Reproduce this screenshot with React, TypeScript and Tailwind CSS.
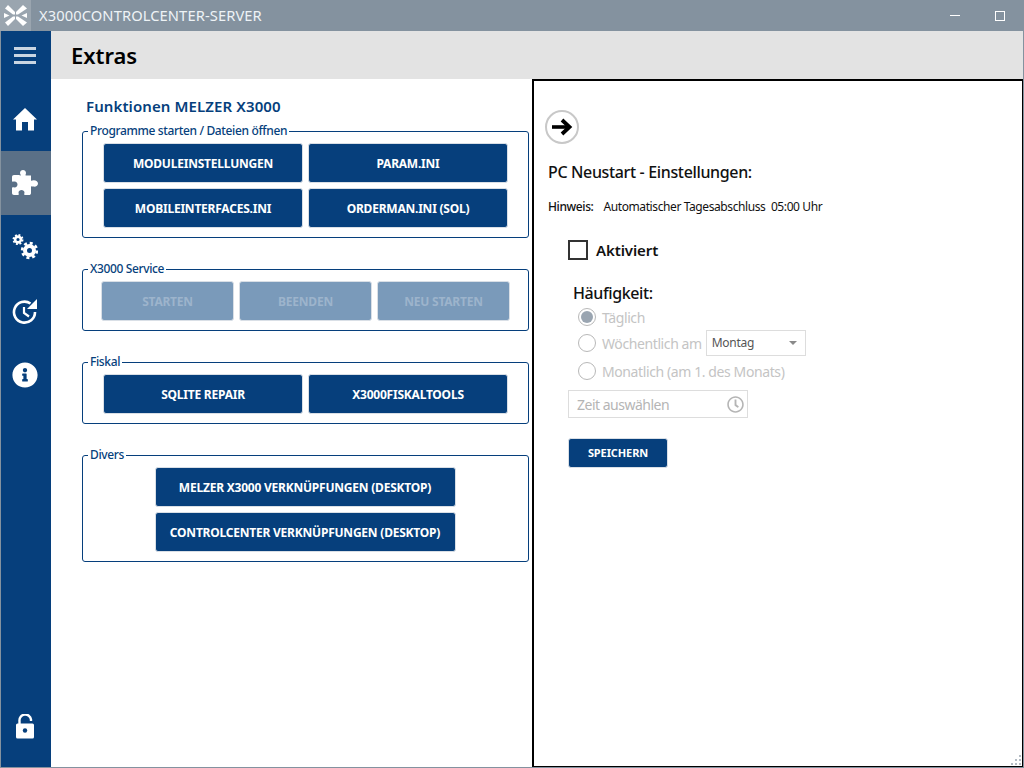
import React from 'react';
import { FaInfoCircle, FaRegClock } from 'react-icons/fa';

function Logo() {
  return (
    <svg width="31" height="31" viewBox="0 0 31 31" className="bg-[#9aa5af] shrink-0">
      <g fill="#ffffff">
        <path d="M8 5 L11 8 L15 12 L15 14.5 L13 14.5 L5 8.5 Z" />
        <path d="M23 5 L27 8.5 L18 14.5 L16 14.5 L16 12 Z" />
        <path d="M5 22.5 L13 16.5 L15 16.5 L15 19 L8 26 Z" />
        <path d="M27 22.5 L23 26 L16 19 L16 16.5 L18 16.5 Z" />
        <path d="M4 13 L9.5 15.5 L4 18 Z" />
        <path d="M27 13 L21.5 15.5 L27 18 Z" />
      </g>
    </svg>
  );
}

function HomeIcon() {
  return (
    <svg width="24" height="23" viewBox="0 0 24 23" fill="#ffffff">
      <path d="M12 0 L24 11.5 L21 11.5 L21 22.5 L15 22.5 L15 14 L9 14 L9 22.5 L3 22.5 L3 11.5 L0 11.5 Z" />
    </svg>
  );
}

function PuzzleIcon() {
  return (
    <svg width="26" height="26" viewBox="0 0 26 26" fill="#ffffff">
      <path d="M7 5 C7 5 8 5.5 8.5 5.5 C9.5 5.5 8 4.5 8 3 C8 1 9.5 0 11 0 C12.5 0 14 1 14 3 C14 4.5 12.8 5.5 14 5.5 L19 5.5 L19 10 C19 11.5 20 10.5 21.5 10.2 C24 10 26 11.5 26 13.5 C26 15.5 24 17 21.5 16.6 C20 16.4 19 15.5 19 17 L19 23 C19 24.5 18 25 17 25 L13 25 C11.5 25 12.5 23.5 12.5 22.5 C12.5 21 11 20 9.5 20 C8 20 6.5 21 6.5 22.5 C6.5 23.5 7.5 25 6 25 L2 25 C0.8 25 0 24.2 0 23 L0 18 C0 16.8 1.5 17.5 2.5 17.5 C4.5 17.5 5.5 16 5.5 14.5 C5.5 13 4.5 11.5 2.5 11.5 C1.5 11.5 0 12.2 0 11 L0 7 C0 5.8 0.8 5 2 5 Z" />
    </svg>
  );
}

function GearsIcon() {
  return (
    <svg width="26" height="26" viewBox="0 0 26 26" fill="none" stroke="#ffffff">
      <circle cx="6" cy="5.5" r="2.9" strokeWidth="2.6" />
      <circle cx="6" cy="5.5" r="4.6" strokeWidth="1.8" strokeDasharray="1.9 1.71" />
      <circle cx="17.5" cy="16.5" r="4.5" strokeWidth="4" />
      <circle cx="17.5" cy="16.5" r="7.4" strokeWidth="2.6" strokeDasharray="3 2.81" />
    </svg>
  );
}

function HistoryIcon() {
  return (
    <svg width="26" height="26" viewBox="0 0 26 26" fill="none" stroke="#ffffff">
      <path d="M23 14 A10.5 10.5 0 1 1 18.5 5.5" strokeWidth="2.6" />
      <path d="M25 1 L25 11 L15 11 Z" fill="#ffffff" stroke="none" />
      <path d="M12 9 L12 15 L17 18.5" strokeWidth="2.2" />
    </svg>
  );
}

function LockIcon() {
  return (
    <svg width="20" height="25" viewBox="0 0 20 25" fill="none">
      <path d="M4.5 10 L4.5 7 A5.8 5.8 0 0 1 16 5.5 L16 7" stroke="#ffffff" strokeWidth="2.4" />
      <rect x="1" y="9.5" width="18" height="15" rx="1.5" fill="#ffffff" />
      <circle cx="10" cy="16.5" r="2.2" fill="#063f7c" />
    </svg>
  );
}

function ArrowIcon() {
  return (
    <svg width="22" height="18" viewBox="0 0 22 18" fill="none" stroke="#000000">
      <path d="M1 9 L18 9" strokeWidth="3.6" />
      <path d="M11 2 L18.5 9 L11 16" strokeWidth="3.8" />
    </svg>
  );
}

function SideItem({ children, active }: { children: React.ReactNode; active?: boolean }) {
  return (
    <div className={`h-16 flex items-center justify-center pr-[2px] text-white ${active ? 'bg-[#5a7087]' : ''}`}>
      {children}
    </div>
  );
}

function Sidebar() {
  return (
    <div className="w-[50px] shrink-0 bg-[#063f7c] flex flex-col">
      <div className="h-[56px] flex flex-col items-center justify-center gap-[4px] pb-[8px] pr-[2px]">
        <div className="w-[22px] h-[3px] bg-[#c9d5e2]" />
        <div className="w-[22px] h-[3px] bg-[#c9d5e2]" />
        <div className="w-[22px] h-[3px] bg-[#c9d5e2]" />
      </div>
      <SideItem><HomeIcon /></SideItem>
      <SideItem active><PuzzleIcon /></SideItem>
      <SideItem><GearsIcon /></SideItem>
      <SideItem><HistoryIcon /></SideItem>
      <SideItem><FaInfoCircle size={26} /></SideItem>
      <div className="mt-auto h-[78px] flex items-center justify-center pr-[2px] pb-[3px]">
        <LockIcon />
      </div>
    </div>
  );
}

function Btn({ label, w, disabled }: { label: string; w: string; disabled?: boolean }) {
  return (
    <button
      className={`${w} h-10 shrink-0 rounded-[3px] border border-[#d9dfe6] pt-[1px] text-[12px] font-bold tracking-[-0.22px] flex items-center justify-center ${
        disabled ? 'bg-[#7a9aba] text-[#9db4cc]' : 'bg-[#063f7c] text-white'
      }`}
    >
      {label}
    </button>
  );
}

function Group({ title, height, children }: { title: string; height: string; children: React.ReactNode }) {
  return (
    <fieldset className={`${height} border border-[#063f7c] rounded-[3px]`}>
      <legend className="ml-[5px] px-[2px] text-[12px] leading-[18px] tracking-[-0.36px] text-[#063f7c] font-medium">{title}</legend>
      {children}
    </fieldset>
  );
}

function LeftPanel() {
  return (
    <div className="w-[481px] shrink-0 pl-[31px] pr-[3px] pt-[16px]">
      <div className="pl-[4px] h-[22px] text-[15px] leading-[22px] font-semibold tracking-[0.1px] text-[#063f7c]">Funktionen MELZER X3000</div>
      <div className="mt-[5px] flex flex-col">
        <Group title="Programme starten / Dateien öffnen" height="h-[116px]">
          <div className="pt-[3px] pl-[20px] flex flex-col gap-[5px]">
            <div className="flex gap-[5px]">
              <Btn label="MODULEINSTELLUNGEN" w="w-[200px]" />
              <Btn label="PARAM.INI" w="w-[200px]" />
            </div>
            <div className="flex gap-[5px]">
              <Btn label="MOBILEINTERFACES.INI" w="w-[200px]" />
              <Btn label="ORDERMAN.INI (SOL)" w="w-[200px]" />
            </div>
          </div>
        </Group>
        <div className="mt-[22px]">
          <Group title="X3000 Service" height="h-[71px]">
            <div className="pt-[3px] pl-[18px] flex gap-[5px]">
              <Btn label="STARTEN" w="w-[133px]" disabled />
              <Btn label="BEENDEN" w="w-[133px]" disabled />
              <Btn label="NEU STARTEN" w="w-[133px]" disabled />
            </div>
          </Group>
        </div>
        <div className="mt-[22px]">
          <Group title="Fiskal" height="h-[71px]">
            <div className="pt-[3px] pl-[20px] flex gap-[5px]">
              <Btn label="SQLITE REPAIR" w="w-[200px]" />
              <Btn label="X3000FISKALTOOLS" w="w-[200px]" />
            </div>
          </Group>
        </div>
        <div className="mt-[22px]">
          <Group title="Divers" height="h-[116px]">
            <div className="pt-[3px] pr-[1px] flex flex-col items-center gap-[5px]">
              <Btn label="MELZER X3000 VERKNÜPFUNGEN (DESKTOP)" w="w-[301px]" />
              <Btn label="CONTROLCENTER VERKNÜPFUNGEN (DESKTOP)" w="w-[301px]" />
            </div>
          </Group>
        </div>
      </div>
    </div>
  );
}

function Radio({ checked, children }: { checked?: boolean; children: React.ReactNode }) {
  return (
    <div className="flex items-center h-[26px] text-[14px] tracking-[-0.4px] text-[#c4c4c4]">
      <span className="w-[18px] h-[18px] rounded-full border border-[#b8b8b8] flex items-center justify-center shrink-0">
        {checked && <span className="w-[12px] h-[12px] rounded-full bg-[#9aa5b1]" />}
      </span>
      <span className="ml-[6px] flex items-center whitespace-nowrap">{children}</span>
    </div>
  );
}

function RightPanel() {
  return (
    <div className="flex-1 border-t-2 border-l-2 border-r-[1px] border-b-[1px] border-black pl-[11px] pt-[29px] relative">
      <div className="w-[34px] h-[34px] rounded-full border-2 border-[#c8c8c8] flex items-center justify-center">
        <ArrowIcon />
      </div>
      <div className="pl-[3px] mt-[17px] text-[16px] leading-[22px] tracking-[-0.35px] font-medium text-[#111111]">PC Neustart - Einstellungen:</div>
      <div className="pl-[3px] mt-[15px] flex text-[12px] leading-[18px] tracking-[-0.4px] text-[#111111]">
        <span className="font-medium">Hinweis:</span>
        <span className="ml-[10px]">Automatischer Tagesabschluss&nbsp; 05:00 Uhr</span>
      </div>
      <div className="pl-[23px] mt-[24px] flex items-center h-[20px]">
        <span className="w-[20px] h-[20px] border-2 border-[#333333] shrink-0" />
        <span className="ml-[8px] text-[15px] font-semibold tracking-[-0.1px] text-[#111111]">Aktiviert</span>
      </div>
      <div className="pl-[28px] mt-[22px] text-[16px] leading-[22px] tracking-[-0.4px] font-medium text-[#111111]">Häufigkeit:</div>
      <div className="pl-[33px] flex flex-col">
        <Radio checked>Täglich</Radio>
        <Radio>
          Wöchentlich am
          <span className="ml-[4px] w-[100px] h-[26px] border border-[#dddddd] flex items-center justify-between pl-[5px] pr-[8px] text-[12px] tracking-[-0.3px] text-[#555555]">
            Montag
            <span className="w-0 h-0 border-x-[4px] border-x-transparent border-t-[4px] border-t-[#8a8a8a]" />
          </span>
        </Radio>
        <div className="mt-[2px]">
          <Radio>Monatlich (am 1. des Monats)</Radio>
        </div>
      </div>
      <div className="ml-[23px] mt-[6px] w-[180px] h-[28px] border border-[#dddddd] flex items-center justify-between pl-[8px] pr-[2px] text-[14px] tracking-[-0.5px] text-[#b5b5b5]">
        Zeit auswählen
        <FaRegClock size={17} className="mr-[1px] text-[#b5b5b5]" />
      </div>
      <button className="ml-[23px] mt-[20px] w-[100px] h-[30px] rounded-[3px] border border-[#d9dfe6] bg-[#063f7c] text-white text-[11px] font-bold tracking-[-0.1px] flex items-center justify-center">
        SPEICHERN
      </button>
      <svg width="12" height="12" viewBox="0 0 12 12" className="absolute right-0 bottom-0" fill="#b4bcc4">
        <rect x="9" y="1" width="2" height="2" />
        <rect x="9" y="5" width="2" height="2" />
        <rect x="5" y="5" width="2" height="2" />
        <rect x="9" y="9" width="2" height="2" />
        <rect x="5" y="9" width="2" height="2" />
        <rect x="1" y="9" width="2" height="2" />
      </svg>
    </div>
  );
}

export default function App() {
  return (
    <div className="w-[1024px] h-[768px] overflow-hidden flex flex-col bg-[#84929f] font-['Noto_Sans',sans-serif]">
      <div className="h-[31px] shrink-0 flex items-center text-[#eef3f6]">
        <Logo />
        <span className="ml-[8px] text-[14.7px] tracking-[0.1px]">X3000CONTROLCENTER-SERVER</span>
        <div className="ml-auto flex items-center pr-[19px]">
          <span className="w-[10px] h-px bg-white" />
          <span className="ml-[35px] w-[10px] h-[10px] border border-white" />
        </div>
      </div>
      <div className="flex-1 min-h-0 flex mx-px mb-px">
        <Sidebar />
        <div className="flex-1 min-w-0 flex flex-col bg-white">
          <div className="h-[48px] shrink-0 bg-[#e3e3e3] pl-[20px] pt-[1px] flex items-center text-[22px] tracking-[-0.05px] font-semibold text-black">Extras</div>
          <div className="flex-1 min-h-0 flex">
            <LeftPanel />
            <RightPanel />
          </div>
        </div>
      </div>
    </div>
  );
}
